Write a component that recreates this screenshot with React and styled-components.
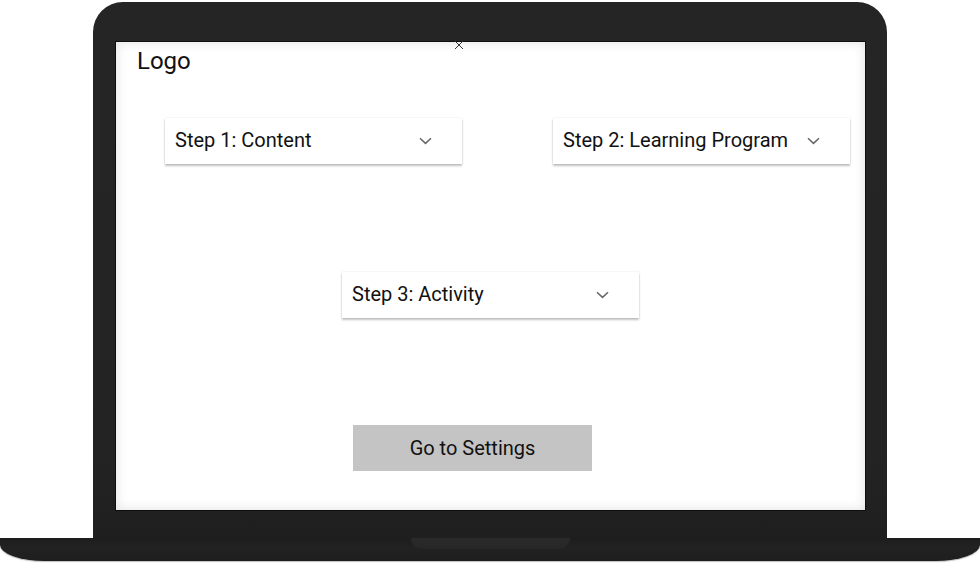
import React from 'react';
import styled, { createGlobalStyle } from 'styled-components';

const GlobalStyle = createGlobalStyle`
	html, body {
		margin: 0;
		padding: 0;
		background: #ffffff;
	}
	body {
		font-family: Roboto, 'Liberation Sans', sans-serif;
	}
`;

export const Page = styled.div`
	width: 980px;
	height: 565px;
	overflow: hidden;
	background: #ffffff;
	display: flex;
	flex-direction: column;
	padding-top: 2px;
	box-sizing: border-box;
`;

export const Lid = styled.div`
	margin: 0 93px;
	height: 536px;
	box-sizing: border-box;
	padding: 39px 21px 27px 22px;
	background: linear-gradient(180deg, #252525 0%, #232323 85%, #1f1f1f 100%);
	border-radius: 30px 30px 0 0;
	display: flex;
`;

export const Screen = styled.div`
	flex: 1;
	position: relative;
	background: #ffffff;
	border: 1px solid #0e0e0e;
	box-shadow: inset 0 0 12px rgba(0, 0, 0, 0.12);
	display: flex;
	flex-direction: column;
	align-items: flex-start;
	padding: 5px 0 0 0;
`;

export const Base = styled.div`
	height: 23px;
	background: linear-gradient(180deg, #1d1d1d 0%, #222222 40%, #1e1e1e 100%);
	border-radius: 0 0 44px 44px / 0 0 16px 16px;
	box-shadow: 0 1px 1px rgba(0, 0, 0, 0.25);
	display: flex;
	justify-content: center;
`;

export const Notch = styled.div`
	width: 159px;
	height: 11px;
	background: linear-gradient(180deg, #2b2b2b 0%, #262626 100%);
	border-radius: 0 0 12px 12px;
`;

export const Logo = styled.div`
	margin-left: 21px;
	font-size: 24px;
	line-height: 28px;
	color: #111111;
`;

export const Close = styled.button`
	position: absolute;
	top: -2px;
	left: 337px;
	width: 12px;
	height: 10px;
	padding: 0;
	border: none;
	background: none;
	display: flex;
	align-items: center;
	justify-content: center;
`;

export const StepRow = styled.div`
	align-self: stretch;
	display: flex;
	justify-content: space-between;
	padding: 0 15px 0 49px;
	margin-top: ${(p) => p.$top}px;
`;

export const Select = styled.div`
	width: 297px;
	height: 46px;
	box-sizing: border-box;
	background: #ffffff;
	box-shadow: 0 2px 2px rgba(0, 0, 0, 0.24), 0 0 2px rgba(0, 0, 0, 0.1);
	display: flex;
	align-items: center;
	justify-content: space-between;
	padding: 0 30px 3px 10px;
	font-size: 20px;
	color: #111111;
	align-self: ${(p) => p.$align || 'auto'};
	margin-top: ${(p) => p.$top || 0}px;
`;

export const Chevron = styled.svg`
	width: 13px;
	height: 8px;
	margin-top: 3px;
`;

export const SettingsButton = styled.button`
	margin: 107px 0 0 237px;
	width: 239px;
	height: 46px;
	border: none;
	background: #c4c4c4;
	font-family: Roboto, 'Liberation Sans', sans-serif;
	font-size: 20px;
	color: #111111;
	padding: 0;
	cursor: pointer;
`;

function Step({ label, align, top }) {
	return (
		<Select $align={align} $top={top}>
			<span>{label}</span>
			<Chevron viewBox="0 0 13 8">
				<path d="M1 1.2 L6.5 6.4 L12 1.2" fill="none" stroke="#666" strokeWidth="1.5" />
			</Chevron>
		</Select>
	);
}

export default function App() {
	return (
		<>
			<GlobalStyle />
			<Page>
				<Lid>
					<Screen>
						<Close aria-label="close">
							<svg width="10" height="10" viewBox="0 0 10 10">
								<path d="M1 1 L9 9 M9 1 L1 9" stroke="#333" strokeWidth="1" />
							</svg>
						</Close>
						<Logo>Logo</Logo>
						<StepRow $top={43}>
							<Step label="Step 1: Content" />
							<Step label="Step 2: Learning Program" />
						</StepRow>
						<Step label="Step 3: Activity" align="center" top={108} />
						<SettingsButton>Go to Settings</SettingsButton>
					</Screen>
				</Lid>
				<Base>
					<Notch />
				</Base>
			</Page>
		</>
	);
}
